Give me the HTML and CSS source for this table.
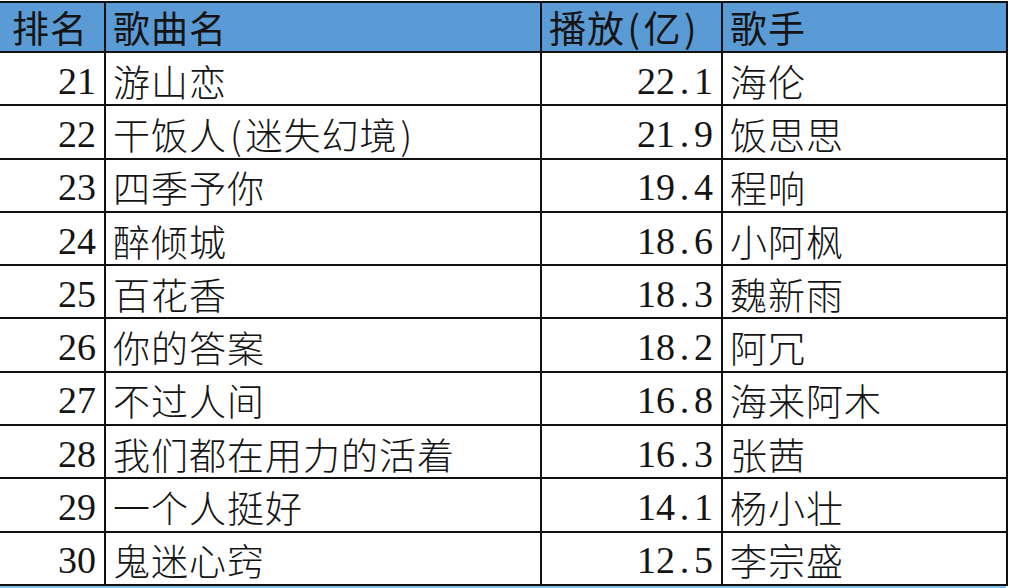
FILE: index.html
```html
<!DOCTYPE html>
<html lang="zh-CN">
<head>
<meta charset="utf-8">
<title>排名</title>
<link rel="stylesheet" href="styles.css">
</head>
<body>
<table class="rank">
  <colgroup>
    <col class="c-rank">
    <col class="c-song">
    <col class="c-play">
    <col class="c-singer">
  </colgroup>
  <thead>
    <tr class="head">
      <th>排名</th>
      <th>歌曲名</th>
      <th>播放<span class="paren">(</span>亿<span class="paren">)</span></th>
      <th>歌手</th>
    </tr>
  </thead>
  <tbody>
    <tr><td class="num">21</td><td class="zh">游山恋</td><td class="num">22<span class="dot">.</span>1</td><td class="zh">海伦</td></tr>
    <tr><td class="num">22</td><td class="zh">干饭人<span class="paren">(</span>迷失幻境<span class="paren">)</span></td><td class="num">21<span class="dot">.</span>9</td><td class="zh">饭思思</td></tr>
    <tr><td class="num">23</td><td class="zh">四季予你</td><td class="num">19<span class="dot">.</span>4</td><td class="zh">程响</td></tr>
    <tr><td class="num">24</td><td class="zh">醉倾城</td><td class="num">18<span class="dot">.</span>6</td><td class="zh">小阿枫</td></tr>
    <tr><td class="num">25</td><td class="zh">百花香</td><td class="num">18<span class="dot">.</span>3</td><td class="zh">魏新雨</td></tr>
    <tr><td class="num">26</td><td class="zh">你的答案</td><td class="num">18<span class="dot">.</span>2</td><td class="zh">阿冗</td></tr>
    <tr><td class="num">27</td><td class="zh">不过人间</td><td class="num">16<span class="dot">.</span>8</td><td class="zh">海来阿木</td></tr>
    <tr><td class="num">28</td><td class="zh">我们都在用力的活着</td><td class="num">16<span class="dot">.</span>3</td><td class="zh">张茜</td></tr>
    <tr><td class="num">29</td><td class="zh">一个人挺好</td><td class="num">14<span class="dot">.</span>1</td><td class="zh">杨小壮</td></tr>
    <tr><td class="num">30</td><td class="zh">鬼迷心窍</td><td class="num">12<span class="dot">.</span>5</td><td class="zh">李宗盛</td></tr>
  </tbody>
</table>
<div class="next-row"></div>
</body>
</html>
```
FILE: styles.css
```css
html, body {
  margin: 0;
  padding: 0;
  background: #ffffff;
  overflow: hidden;
}

body {
  width: 1010px;
  height: 588px;
  font-family: "Noto Sans CJK SC", "Noto Sans", sans-serif;
  color: #141414;
}

.rank {
  border-collapse: collapse;
  table-layout: fixed;
  width: 1008px;
  margin: 1px 0 0 -2px;
}

.c-rank { width: 106px; }
.c-song { width: 436px; }
.c-play { width: 181px; }
.c-singer { width: 285px; }

.rank th,
.rank td {
  border: 2px solid #111111;
  padding: 0;
  white-space: nowrap;
}

.head {
  height: 50px;
}

.head th {
  background: #5b9bd5;
  font-weight: 400;
  font-size: 37px;
  letter-spacing: 1px;
  line-height: 40px;
  text-align: left;
  padding: 3px 0 3px 7px;
  vertical-align: middle;
}

.head th:first-child {
  padding-left: 12px;
}

.rank tbody tr {
  height: 53.3px;
}

.rank td {
  vertical-align: middle;
  line-height: 40px;
  padding-top: 4px;
  padding-bottom: 0;
}

.zh {
  font-size: 37px;
  font-weight: 300;
  letter-spacing: 1px;
  text-align: left;
}

.rank td.zh {
  padding-left: 7px;
}

.num {
  font-family: "Liberation Serif", "Noto Sans CJK SC", serif;
  font-size: 38px;
  text-align: right;
}

.rank td.num {
  padding-right: 8px;
}

.dot {
  display: inline-block;
  width: 19px;
  text-align: center;
}

.paren {
  display: inline-block;
  width: 18.5px;
  text-align: center;
}

.next-row {
  height: 6px;
  margin-left: -2px;
  width: 1008px;
  background: #7cbfe6;
}
```
